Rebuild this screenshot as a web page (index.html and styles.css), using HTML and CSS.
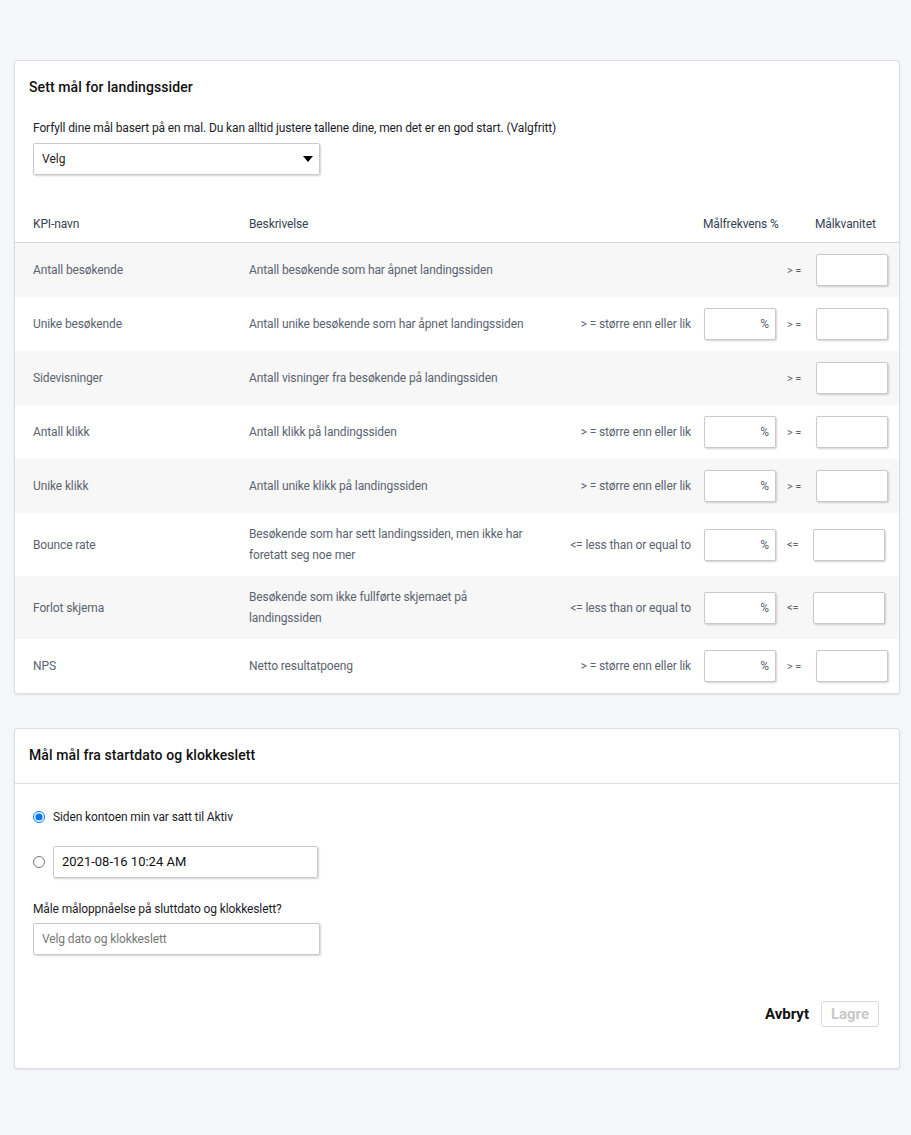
FILE: index.html
```html
<!DOCTYPE html>
<html>
    <head>
        <title>Mål for landingssider</title>
        <meta charset="UTF-8">
        <meta name="viewport" content="width=device-width">
        <link rel="stylesheet" href="styles.css">
    </head>
    <body>
        <div class="page">

            <section class="card">
                <h2 class="card-title">Sett mål for landingssider</h2>
                <div class="intro">
                    <p>Forfyll dine mål basert på en mal. Du kan alltid justere tallene dine, men det er en god start. (Valgfritt)</p>
                    <div class="select">
                        <span>Velg</span>
                        <svg width="10" height="6" viewBox="0 0 10 6"><path d="M0 0h10L5 6z" fill="#000"/></svg>
                    </div>
                </div>

                <div class="kpi-table">
                    <div class="kpi-row kpi-head">
                        <div>KPI-navn</div>
                        <div>Beskrivelse</div>
                        <div></div>
                        <div class="head-pct">Målfrekvens %</div>
                        <div class="head-qty">Målkvanitet</div>
                    </div>

                    <div class="kpi-row shaded">
                        <div>Antall besøkende</div>
                        <div class="desc">Antall besøkende som har åpnet landingssiden</div>
                        <div class="comp"></div>
                        <div></div>
                        <div class="qty"><span class="op">&gt; =</span><span class="box"></span></div>
                    </div>

                    <div class="kpi-row">
                        <div>Unike besøkende</div>
                        <div class="desc">Antall unike besøkende som har åpnet landingssiden</div>
                        <div class="comp">&gt; = større enn eller lik</div>
                        <div class="box pct">%</div>
                        <div class="qty"><span class="op">&gt; =</span><span class="box"></span></div>
                    </div>

                    <div class="kpi-row shaded">
                        <div>Sidevisninger</div>
                        <div class="desc">Antall visninger fra besøkende på landingssiden</div>
                        <div class="comp"></div>
                        <div></div>
                        <div class="qty"><span class="op">&gt; =</span><span class="box"></span></div>
                    </div>

                    <div class="kpi-row">
                        <div>Antall klikk</div>
                        <div class="desc">Antall klikk på landingssiden</div>
                        <div class="comp">&gt; = større enn eller lik</div>
                        <div class="box pct">%</div>
                        <div class="qty"><span class="op">&gt; =</span><span class="box"></span></div>
                    </div>

                    <div class="kpi-row shaded">
                        <div>Unike klikk</div>
                        <div class="desc">Antall unike klikk på landingssiden</div>
                        <div class="comp">&gt; = større enn eller lik</div>
                        <div class="box pct">%</div>
                        <div class="qty"><span class="op">&gt; =</span><span class="box"></span></div>
                    </div>

                    <div class="kpi-row">
                        <div>Bounce rate</div>
                        <div class="desc">Besøkende som har sett landingssiden, men ikke har foretatt seg noe mer</div>
                        <div class="comp">&lt;= less than or equal to</div>
                        <div class="box pct">%</div>
                        <div class="qty"><span class="op">&lt;=</span><span class="box"></span></div>
                    </div>

                    <div class="kpi-row shaded">
                        <div>Forlot skjema</div>
                        <div class="desc">Besøkende som ikke fullførte skjemaet på landingssiden</div>
                        <div class="comp">&lt;= less than or equal to</div>
                        <div class="box pct">%</div>
                        <div class="qty"><span class="op">&lt;=</span><span class="box"></span></div>
                    </div>

                    <div class="kpi-row">
                        <div>NPS</div>
                        <div class="desc">Netto resultatpoeng</div>
                        <div class="comp">&gt; = større enn eller lik</div>
                        <div class="box pct">%</div>
                        <div class="qty"><span class="op">&gt; =</span><span class="box"></span></div>
                    </div>
                </div>
            </section>

            <section class="card">
                <h2 class="card-title divided">Mål mål fra startdato og klokkeslett</h2>
                <div class="card-body">
                    <label class="radio-row">
                        <input type="radio" name="start" checked>
                        <span>Siden kontoen min var satt til Aktiv</span>
                    </label>
                    <label class="radio-row date-row">
                        <input type="radio" name="start">
                        <span class="field date">2021-08-16 10:24 AM</span>
                    </label>
                    <p class="end-label">Måle måloppnåelse på sluttdato og klokkeslett?</p>
                    <div class="field placeholder">Velg dato og klokkeslett</div>

                    <div class="actions">
                        <button class="btn-link">Avbryt</button>
                        <button class="btn-save" disabled>Lagre</button>
                    </div>
                </div>
            </section>

        </div>
    </body>
</html>
```

FILE: styles.css
```css
body
{
    margin: 0;
    background: #f4f6f9;
    font-family: Roboto, "Liberation Sans", sans-serif;
    color: #222;
}
.page
{
    padding: 60px 11px 66px 14px;
}
.card
{
    background: #fff;
    border: 1px solid #d9dde2;
    border-radius: 3px;
    box-shadow: 0 1px 2px rgba(0, 0, 0, 0.08);
    margin-bottom: 34px;
}
.card-title
{
    margin: 0;
    padding: 17px 14px 0;
    font-size: 14px;
    line-height: 18px;
    font-weight: 500;
    letter-spacing: 0.1px;
    color: #111;
}
.card-title.divided
{
    padding: 17px 14px 19px;
    border-bottom: 1px solid #d9dde2;
}
.intro
{
    padding: 24px 18px 0;
}
.intro p
{
    margin: 0;
    font-size: 12px;
    line-height: 16px;
    letter-spacing: -0.12px;
    color: #1c1c28;
}
.select
{
    margin-top: 7px;
    width: 287px;
    height: 32px;
    box-sizing: border-box;
    border: 1px solid #c9c9c9;
    border-radius: 2px;
    box-shadow: 1px 1px 2px rgba(0, 0, 0, 0.18);
    display: flex;
    align-items: center;
    justify-content: space-between;
    padding: 0 6px 0 8px;
    font-size: 12px;
}

/* KPI table */
.kpi-table
{
    margin-top: 31px;
}
.kpi-row
{
    display: grid;
    grid-template-columns: 216px 290px 1fr 72px 111px;
    align-items: center;
    min-height: 54px;
    box-sizing: border-box;
    padding: 10.5px 12px 10.5px 18px;
    font-size: 12px;
    letter-spacing: -0.12px;
    color: #5b6370;
}
.kpi-row.shaded
{
    background: #f7f7f7;
}
.kpi-head
{
    min-height: 37px;
    padding-top: 10px;
    padding-bottom: 10px;
    border-bottom: 1px solid #d3d6da;
    color: #364152;
}
.head-pct
{
    white-space: nowrap;
    margin-left: -1px;
}
.head-qty
{
    padding-left: 39px;
    white-space: nowrap;
}
.desc
{
    line-height: 21px;
}
.comp
{
    text-align: right;
    padding-right: 13px;
    white-space: nowrap;
}
.box
{
    display: block;
    flex-shrink: 0;
    width: 72px;
    height: 32px;
    box-sizing: border-box;
    border: 1px solid #c9c9c9;
    border-radius: 2px;
    box-shadow: 1px 1px 2px rgba(0, 0, 0, 0.18);
    background: #fff;
}
.pct
{
    text-align: right;
    line-height: 30px;
    padding-right: 6px;
    color: #5b6370;
}
.qty
{
    display: flex;
    align-items: center;
    padding-left: 11px;
}
.op
{
    font-size: 11px;
    margin-right: 15px;
    white-space: nowrap;
}

/* dates */
.card-body
{
    padding: 25px 20px 41px 18px;
}
.radio-row
{
    display: flex;
    align-items: center;
    font-size: 12px;
    line-height: 16px;
    letter-spacing: -0.12px;
    color: #1c1c28;
}
.radio-row input
{
    margin: 0 8px 0 0;
    width: 12px;
    height: 12px;
}
.date-row
{
    margin-top: 21px;
}
.field
{
    display: flex;
    align-items: center;
    width: 287px;
    height: 32px;
    box-sizing: border-box;
    border: 1px solid #c9c9c9;
    border-radius: 2px;
    box-shadow: 1px 1px 2px rgba(0, 0, 0, 0.18);
    padding: 0 8px;
    font-size: 12px;
    letter-spacing: -0.12px;
}
.field.date
{
    width: 265px;
    font-size: 13px;
    letter-spacing: 0;
    color: #111;
}
.field.placeholder
{
    color: #777;
}
.end-label
{
    margin: 23px 0 6px;
    font-size: 12px;
    line-height: 16px;
    letter-spacing: -0.12px;
    color: #1c1c28;
}
.actions
{
    display: flex;
    justify-content: flex-end;
    align-items: center;
    gap: 12px;
    margin-top: 46px;
}
.btn-link
{
    border: none;
    background: none;
    padding: 0;
    font-family: inherit;
    font-size: 15px;
    font-weight: 700;
    color: #111;
}
.btn-save
{
    width: 58px;
    height: 26px;
    padding: 0;
    border: 1px solid #dadada;
    border-radius: 3px;
    background: #fff;
    font-family: inherit;
    font-size: 15px;
    font-weight: 700;
    color: #c8c8c8;
}
```
